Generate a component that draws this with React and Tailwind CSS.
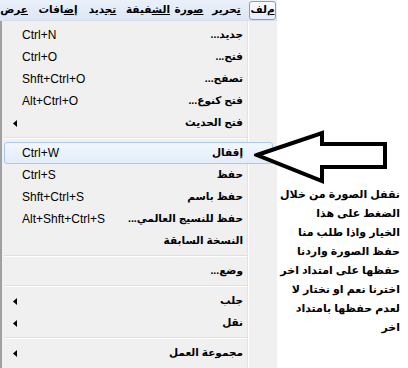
import React from 'react';

const items = [
  { label: 'جديد...', sc: 'Ctrl+N' },
  { label: 'فتح...', sc: 'Ctrl+O' },
  { label: 'تصفح...', sc: 'Shft+Ctrl+O' },
  { label: 'فتح كنوع...', sc: 'Alt+Ctrl+O' },
  { label: 'فتح الحديث', sub: true },
  'sep',
  { label: 'إقفال', sc: 'Ctrl+W', hot: true },
  { label: 'حفظ', sc: 'Ctrl+S' },
  { label: 'حفظ باسم', sc: 'Shft+Ctrl+S' },
  { label: 'حفظ للنسيج العالمي...', sc: 'Alt+Shft+Ctrl+S' },
  { label: 'النسخة السابقة' },
  'sep',
  { label: 'وضع...' },
  'sep',
  { label: 'جلب', sub: true },
  { label: 'نقل', sub: true },
  'sep',
  { label: 'مجموعة العمل', sub: true },
];

const note = [
  'نقفل الصورة من خلال',
  'الضغط على هذا',
  'الخيار واذا طلب منا',
  'حفظ الصورة واردنا',
  'حفظها على امتداد اخر',
  'اخترنا نعم او نختار لا',
  'لعدم حفظها بامتداد',
  'اخر',
];

function SubArrow() {
  return (
    <svg width="4" height="7" viewBox="0 0 4 7" className="block">
      <polygon points="4,0 4,7 0,3.5" fill="#000" />
    </svg>
  );
}

function MenuRow({ item }) {
  return (
    <div
      className={
        'ml-[2px] mr-[4px] flex h-[22px] items-center rounded-[3px] border pl-[8px] pr-[29px] ' +
        (item.hot
          ? 'border-[#a9c9ef] bg-[linear-gradient(#f2f7fd,#e2edfa)]'
          : 'border-transparent')
      }
    >
      <div className="flex w-[100px] items-center">
        {item.sub && <SubArrow />}
        {item.sc && <span className="ml-[9px] text-[12px] text-black">{item.sc}</span>}
      </div>
      <span dir="rtl" className="ml-auto whitespace-nowrap text-[10.5px] font-bold text-black">
        {item.label}
      </span>
    </div>
  );
}

function Separator() {
  return (
    <div className="ml-[2px] h-[8px] w-[243px] pt-[3px]">
      <div className="h-px bg-[#e0e0e0]" />
      <div className="h-px bg-white" />
    </div>
  );
}

export default function App() {
  return (
    <div className="relative flex h-[368px] w-[408px] overflow-hidden bg-white font-['Liberation_Sans','DejaVu_Sans',sans-serif]">
      {/* Menu */}
      <div className="flex w-[277px] flex-col">
        <div
          dir="rtl"
          className="flex h-[21px] items-center overflow-hidden whitespace-nowrap border-b border-[#d5dfec] bg-[linear-gradient(#eaf1fa,#dce7f5)] pr-[1px] text-[10.5px] font-bold text-black"
        >
          <div className="flex h-[19px] w-[27px] items-center justify-center rounded-[3px] border border-[#8d9cb2] bg-[linear-gradient(#fbfcfe,#e6edf7)]">
            <span className="underline">م</span>لف
          </div>
          <div className="mr-[3px] w-[39px] text-center">
            <span className="underline">ت</span>حرير
          </div>
          <div className="w-[36px] text-center">
            <span className="underline">ص</span>ورة
          </div>
          <div className="w-[46px] text-center">
            <span className="underline">الش</span>فيفة
          </div>
          <div className="w-[45px] text-center">
            <span className="underline">تج</span>ديد
          </div>
          <div className="w-[44px] text-center">
            <span className="underline">إض</span>افات
          </div>
          <div className="flex-1 pr-[8px]">
            <span className="underline">ع</span>رض
          </div>
        </div>

        <div className="flex-1 border-l-2 border-[#a0a0a0] bg-[linear-gradient(to_right,#f0f0f0_245px,#e2e3e3_245px,#e2e3e3_246px,#ffffff_246px,#ffffff_247px,#f0f0f0_247px)] pt-[3px]">
          {items.map((item, i) =>
            item === 'sep' ? <Separator key={i} /> : <MenuRow key={i} item={item} />
          )}
        </div>
      </div>

      {/* Note */}
      <div dir="rtl" className="flex-1 pr-[8px] pt-[185px] text-[11px] font-bold leading-[19px] text-black">
        {note.map((line, i) => (
          <div key={i} className="whitespace-nowrap">
            {line}
          </div>
        ))}
      </div>

      {/* Pointer arrow */}
      <svg
        width="134"
        height="54"
        viewBox="0 0 134 54"
        className="absolute left-[254px] top-[130px]"
      >
        <polygon
          points="3,25 68,3 68,14 131,14 131,37 68,37 68,51"
          fill="#fff"
          stroke="#000"
          strokeWidth="4"
          strokeLinejoin="miter"
        />
      </svg>
    </div>
  );
}
